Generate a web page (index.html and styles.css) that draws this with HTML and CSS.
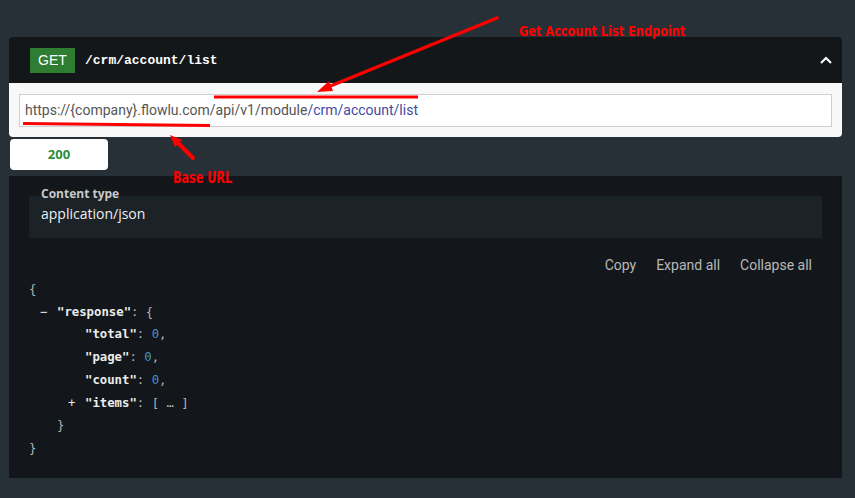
FILE: index.html
```html
<!DOCTYPE html>
<html lang="en">
<head>
    <meta charset="UTF-8">
    <title>GET /crm/account/list</title>
    <link rel="stylesheet" href="styles.css">
</head>
<body>

    <!-- Operation block -->
    <div class="op">
        <div class="op-head">
            <span class="method">GET</span>
            <span class="path">/crm/account/list</span>
            <svg class="chevron" width="12" height="8" viewBox="0 0 12 8">
                <polyline points="1,7 6,2 11,7" fill="none" stroke="#fff" stroke-width="2"/>
            </svg>
        </div>
        <div class="op-body">
            <div class="url-box">
                <span class="url-base">https://{company}.flowlu.com/api/v1/module</span><span class="url-path">/crm/account/list</span>
            </div>
        </div>
    </div>

    <!-- Response tabs -->
    <div class="tabs">
        <div class="tab">200</div>
    </div>

    <!-- Response body -->
    <div class="response">
        <div class="content-type">
            <div class="ct-label">Content type</div>
            <div class="ct-value">application/json</div>
        </div>

        <div class="actions">
            <span>Copy</span>
            <span>Expand all</span>
            <span>Collapse all</span>
        </div>

        <div class="json">
            <div class="row"><span class="punct">{</span></div>
            <div class="row lvl1"><span class="toggle">&minus;</span><span class="key">"response"</span><span class="punct">: {</span></div>
            <div class="row lvl2"><span class="key">"total"</span><span class="punct">: </span><span class="num">0</span><span class="punct">,</span></div>
            <div class="row lvl2"><span class="key">"page"</span><span class="punct">: </span><span class="num">0</span><span class="punct">,</span></div>
            <div class="row lvl2"><span class="key">"count"</span><span class="punct">: </span><span class="num">0</span><span class="punct">,</span></div>
            <div class="row lvl2"><span class="toggle">+</span><span class="key">"items"</span><span class="punct">: [ &hellip; ]</span></div>
            <div class="row lvl1"><span class="punct">}</span></div>
            <div class="row"><span class="punct">}</span></div>
        </div>
    </div>

    <!-- Red annotations drawn over the screenshot -->
    <svg class="marks" width="855" height="498" viewBox="0 0 855 498">
        <line x1="497" y1="18" x2="328" y2="87" stroke="#f00" stroke-width="3.5" stroke-linecap="round"/>
        <polygon points="317,92 333,91 329,81" fill="#f00"/>
        <line x1="214" y1="97" x2="418" y2="97" stroke="#f00" stroke-width="3"/>
        <line x1="23" y1="123.5" x2="210" y2="125.5" stroke="#f00" stroke-width="3"/>
        <line x1="193" y1="158" x2="176" y2="141" stroke="#f00" stroke-width="4" stroke-linecap="round"/>
        <polygon points="170,135 182,140 175,147" fill="#f00"/>
    </svg>
    <div class="note note-endpoint">Get Account List Endpoint</div>
    <div class="note note-base">Base URL</div>

</body>
</html>
```

FILE: styles.css
```css
* {
    margin: 0;
    padding: 0;
    box-sizing: border-box;
}

body {
    background-color: #273037;
    padding: 37px 13px 0 9px;
    height: 498px;
    overflow: hidden;
    position: relative;
    font-family: Roboto, "Liberation Sans", sans-serif;
}

/* Operation block */
.op {
    border-radius: 4px;
    overflow: hidden;
}

.op-head {
    display: flex;
    align-items: center;
    height: 46px;
    padding: 0 10px 0 21px;
    background-color: #13171a;
}

.method {
    width: 45px;
    height: 25px;
    line-height: 25px;
    margin-right: 10px;
    text-align: center;
    background-color: #2e7d32;
    color: #fff;
    font-family: "Liberation Sans", Arial, sans-serif;
    font-size: 14px;
}

.path {
    flex: 1;
    color: #fff;
    font-family: "Liberation Mono", "Courier New", monospace;
    font-size: 13px;
    font-weight: bold;
}

.chevron {
    display: block;
}

.op-body {
    background-color: #f8f8f8;
    padding: 11px 10px 10px;
}

.url-box {
    height: 33px;
    line-height: 31px;
    padding: 0 5px;
    background-color: #fff;
    border: 1px solid #cfcfcf;
    font-size: 14px;
    white-space: nowrap;
}

.url-base {
    color: #555;
}

.url-path {
    color: #3f4aa3;
}

/* Tabs */
.tabs {
    display: flex;
    padding: 2px 0 0 1px;
}

.tab {
    width: 98px;
    height: 31px;
    line-height: 31px;
    text-align: center;
    background-color: #fff;
    border-radius: 4px;
    color: #2e8b3a;
    font-family: "Open Sans", sans-serif;
    font-size: 13px;
    font-weight: bold;
}

/* Response */
.response {
    margin-top: 6px;
    padding: 20px 20px 18px;
    background-color: #13171b;
}

.content-type {
    display: flow-root;
    background-color: #1b2228;
    padding: 0 12px 14px;
}

.ct-label {
    margin-top: -10px;
    line-height: 16px;
    color: #c9c9c9;
    font-family: "Open Sans", sans-serif;
    font-size: 12px;
    font-weight: bold;
}

.ct-value {
    margin-top: 2px;
    line-height: 20px;
    color: #eee;
    font-family: "Open Sans", sans-serif;
    font-size: 14px;
}

.actions {
    display: flex;
    justify-content: flex-end;
    gap: 20px;
    margin-top: 17px;
    padding-right: 10px;
    line-height: 20px;
    color: #b8b8b8;
    font-size: 14px;
}

.json {
    margin-top: 3px;
    font-family: "DejaVu Sans Mono", monospace;
    font-size: 12.3px;
}

.row {
    line-height: 22.7px;
    white-space: pre;
}

.lvl1 { padding-left: 28px; }
.lvl2 { padding-left: 56px; }

.toggle {
    display: inline-block;
    width: 17px;
    margin-left: -17px;
    color: #e6e6e6;
}

.key {
    color: #ececec;
    font-weight: bold;
}

.punct {
    color: #b4b4b4;
}

.num {
    color: #4690c8;
}

/* Annotations */
.marks {
    position: absolute;
    top: 0;
    left: 0;
    pointer-events: none;
}

.note {
    position: absolute;
    color: #f00;
    font-family: "DejaVu Sans", sans-serif;
    font-stretch: condensed;
    font-weight: bold;
    white-space: nowrap;
    transform-origin: left top;
}

.note-endpoint {
    top: 23px;
    left: 519px;
    font-size: 14px;
    transform: scaleX(0.9);
}

.note-base {
    top: 169px;
    left: 173px;
    font-size: 15px;
    transform: scaleX(0.83);
}
```
